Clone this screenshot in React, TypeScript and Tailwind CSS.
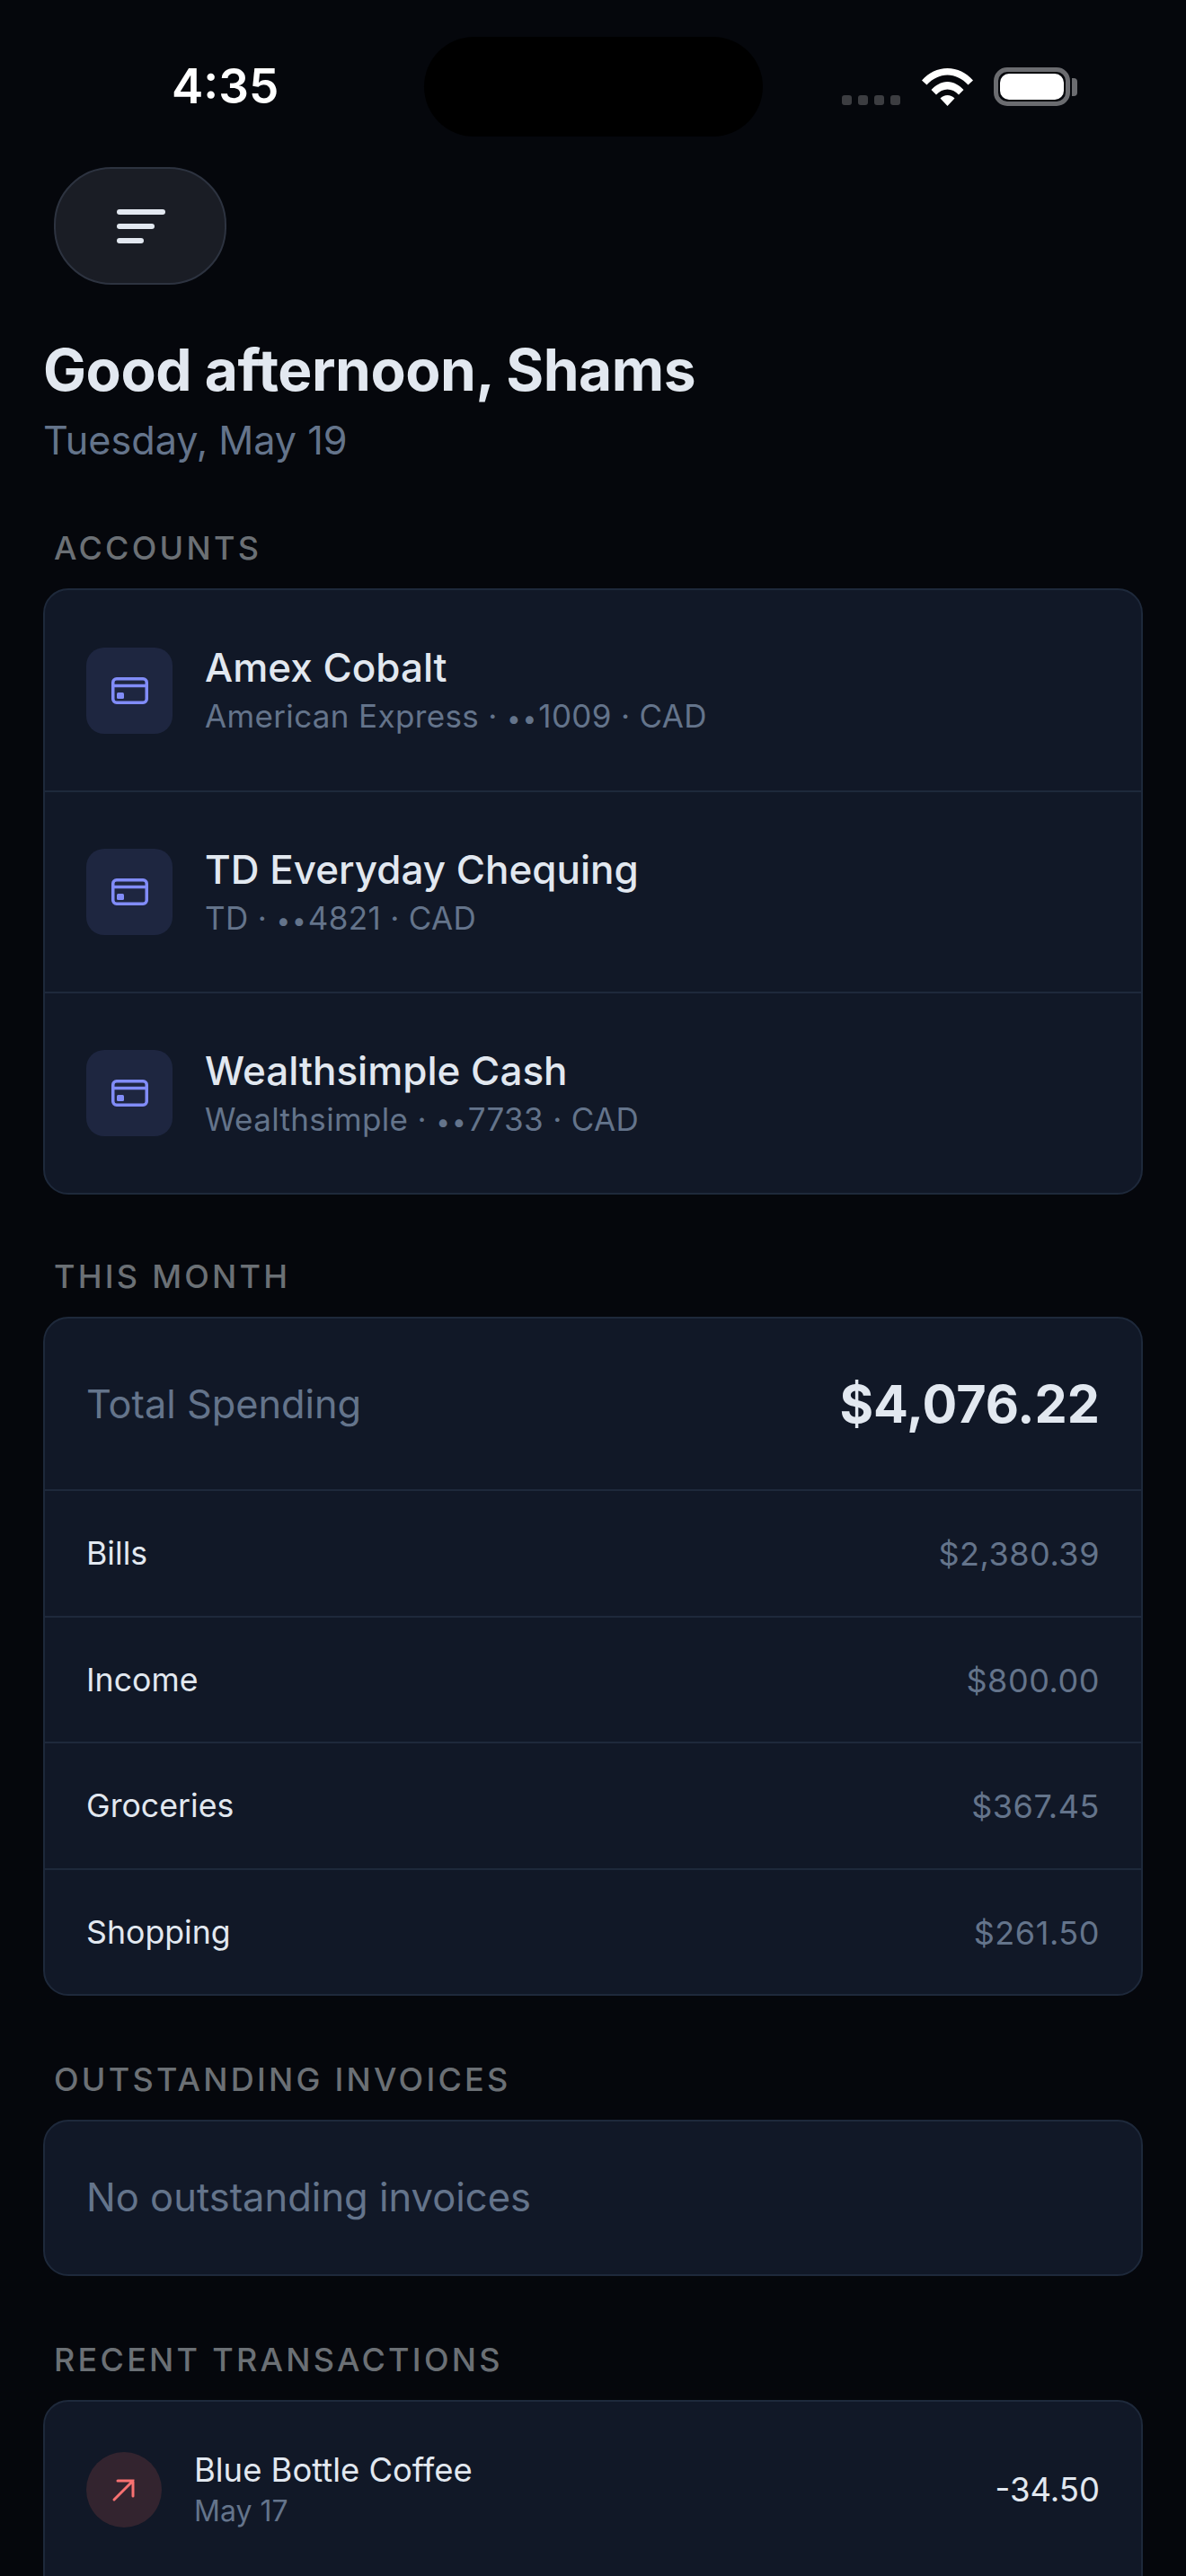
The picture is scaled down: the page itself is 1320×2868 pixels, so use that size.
import React from "react";

const accounts = [
  { name: "Amex Cobalt", bank: "American Express · ", last: "1009 · CAD" },
  { name: "TD Everyday Chequing", bank: "TD · ", last: "4821 · CAD" },
  { name: "Wealthsimple Cash", bank: "Wealthsimple · ", last: "7733 · CAD" },
];

const spending = [
  { label: "Bills", amount: "$2,380.39" },
  { label: "Income", amount: "$800.00" },
  { label: "Groceries", amount: "$367.45" },
  { label: "Shopping", amount: "$261.50" },
];

function CardIcon() {
  return (
    <svg width="41" height="30" viewBox="0 0 41 30" fill="none" className="text-[#818cf8]">
      <rect x="1.750" y="1.750" width="37.500" height="26.500" rx="4" stroke="currentColor" strokeWidth="3.500" />
      <path d="M2 9.500H39" stroke="currentColor" strokeWidth="3.500" />
      <rect x="6" y="17" width="8" height="7" rx="1.500" fill="currentColor" />
    </svg>
  );
}

function SectionLabel({ children }: { children: React.ReactNode }) {
  return (
    <h2 className="pl-[12px] text-[36px] leading-[44px] font-medium tracking-[0.09em] text-[#6b7075]">
      {children}
    </h2>
  );
}

function StatusBar() {
  return (
    <div className="flex h-[111px] items-center pl-[191px]">
      <span className="w-[281px] text-[53px] leading-none font-semibold text-white">4:35</span>
      <div className="h-[111px] w-[377px] rounded-[56px] bg-black" />
      <div className="mt-[30px] ml-[88px] flex gap-[7px]">
        {[0, 1, 2, 3].map((i) => (
          <div key={i} className="h-[11px] w-[11px] rounded-[3px] bg-[#3c3d41]" />
        ))}
      </div>
      <div className="ml-[24px] flex items-center">
        <svg width="57" height="42" viewBox="0 0 57 42" fill="white">
          <path d="M0 13.500C7.500 5 17.500 0 28.500 0S49.500 5 57 13.500L51.500 18.500C45 11.500 37 7.500 28.500 7.500S12 11.500 5.500 18.500Z" />
          <path d="M10.500 24C15 19 21.500 15 28.500 15S42 19 46.500 24L41 29.500C37.500 25.500 33 23.500 28.500 23.500S19.500 25.500 16 29.500Z" />
          <path d="M20.500 33.500C22.500 31.500 25.500 30 28.500 30S34.500 31.500 36.500 33.500L28.500 42Z" />
        </svg>
        <div className="ml-[23px] flex h-[43px] w-[85px] items-center justify-center rounded-[15px] border-[5px] border-[#6b6c70]">
          <div className="h-[29px] w-[71px] rounded-[10px] bg-white" />
        </div>
        <div className="ml-[2px] h-[20px] w-[6px] rounded-r-[4px] bg-[#6b6c70]" />
      </div>
    </div>
  );
}

export default function App() {
  return (
    <div className="h-[2868px] w-[1320px] overflow-hidden bg-[#05070c] pt-[41px] font-['Inter',sans-serif]">
      <StatusBar />

      <button className="mt-[34px] ml-[60px] flex h-[131px] w-[192px] flex-col items-start justify-center gap-[10px] rounded-[64px] border-2 border-[#2d3340] bg-[#1a1d25] pl-[68px]">
        <span className="h-[6px] w-[54px] rounded-full bg-[#e2e8f0]" />
        <span className="h-[6px] w-[42px] rounded-full bg-[#e2e8f0]" />
        <span className="h-[6px] w-[30px] rounded-full bg-[#e2e8f0]" />
      </button>

      <div className="px-[48px]">
        <h1 className="mt-[55px] text-[64px] leading-[80px] font-bold tracking-[-0.007em] text-[#e2e8f0]">
          Good afternoon, Shams
        </h1>
        <p className="mt-[10px] text-[43.200px] leading-[56px] text-[#64748b]">Tuesday, May 19</p>

        <div className="mt-[70px]">
          <SectionLabel>ACCOUNTS</SectionLabel>
          <div className="mt-[23px] overflow-hidden rounded-[28px] border-2 border-[#1e293b] bg-[#111827]">
            {accounts.map((a, i) => (
              <div
                key={a.name}
                className={`flex items-center gap-[36px] px-[46px] ${i > 0 ? "h-[224px] border-t-2 border-[#1e293b]" : "h-[223px]"}`}
              >
                <div className="flex h-[96px] w-[96px] items-center justify-center rounded-[20px] bg-[#1e2640]">
                  <CardIcon />
                </div>
                <div>
                  <div className="text-[44px] leading-[60px] font-[450] text-[#e2e8f0]">{a.name}</div>
                  <div className="text-[35px] leading-[48px] tracking-[0.01em] text-[#64748b]">
                    {a.bank}
                    <span className="text-[28px] tracking-[0.07em]">••</span>
                    {a.last}
                  </div>
                </div>
              </div>
            ))}
          </div>
        </div>

        <div className="mt-[69px]">
          <SectionLabel>THIS MONTH</SectionLabel>
          <div className="mt-[23px] overflow-hidden rounded-[28px] border-2 border-[#1e293b] bg-[#111827]">
            <div className="flex h-[190px] items-center justify-between px-[46px]">
              <span className="text-[43.300px] text-[#64748b]">Total Spending</span>
              <span className="text-[57.500px] font-bold text-[#e2e8f0]">$4,076.22</span>
            </div>
            {spending.map((s) => (
              <div
                key={s.label}
                className="flex h-[140.500px] items-center justify-between border-t-2 border-[#1e293b] px-[46px] pt-[2px]"
              >
                <span className="text-[35.700px] text-[#e2e8f0]">{s.label}</span>
                <span className="text-[36px] tracking-[0.015em] text-[#64748b]">{s.amount}</span>
              </div>
            ))}
          </div>
        </div>

        <div className="mt-[71px]">
          <SectionLabel>OUTSTANDING INVOICES</SectionLabel>
          <div className="mt-[23px] flex h-[174px] items-center rounded-[28px] border-2 border-[#1e293b] bg-[#111827] px-[46px]">
            <span className="text-[43.500px] text-[#64748b]">No outstanding invoices</span>
          </div>
        </div>

        <div className="mt-[71px]">
          <SectionLabel>RECENT TRANSACTIONS</SectionLabel>
          <div className="mt-[23px] h-[300px] rounded-[28px] border-2 border-[#1e293b] bg-[#111827] px-[46px] pt-[52px]">
            <div className="flex items-center gap-[36px]">
              <div className="flex h-[84px] w-[84px] items-center justify-center rounded-full bg-[#33242f]">
                <svg width="28" height="28" viewBox="0 0 28 28" fill="none" stroke="#f87171" strokeWidth="3" strokeLinecap="round">
                  <path d="M3 25L24 4M7 4H24V21" />
                </svg>
              </div>
              <div className="flex-1">
                <div className="text-[36.400px] leading-[48px] text-[#e2e8f0]">Blue Bottle Coffee</div>
                <div className="text-[32px] leading-[44px] text-[#64748b]">May 17</div>
              </div>
              <span className="text-[36.500px] text-[#e2e8f0]">-34.50</span>
            </div>
          </div>
        </div>
      </div>
    </div>
  );
}
